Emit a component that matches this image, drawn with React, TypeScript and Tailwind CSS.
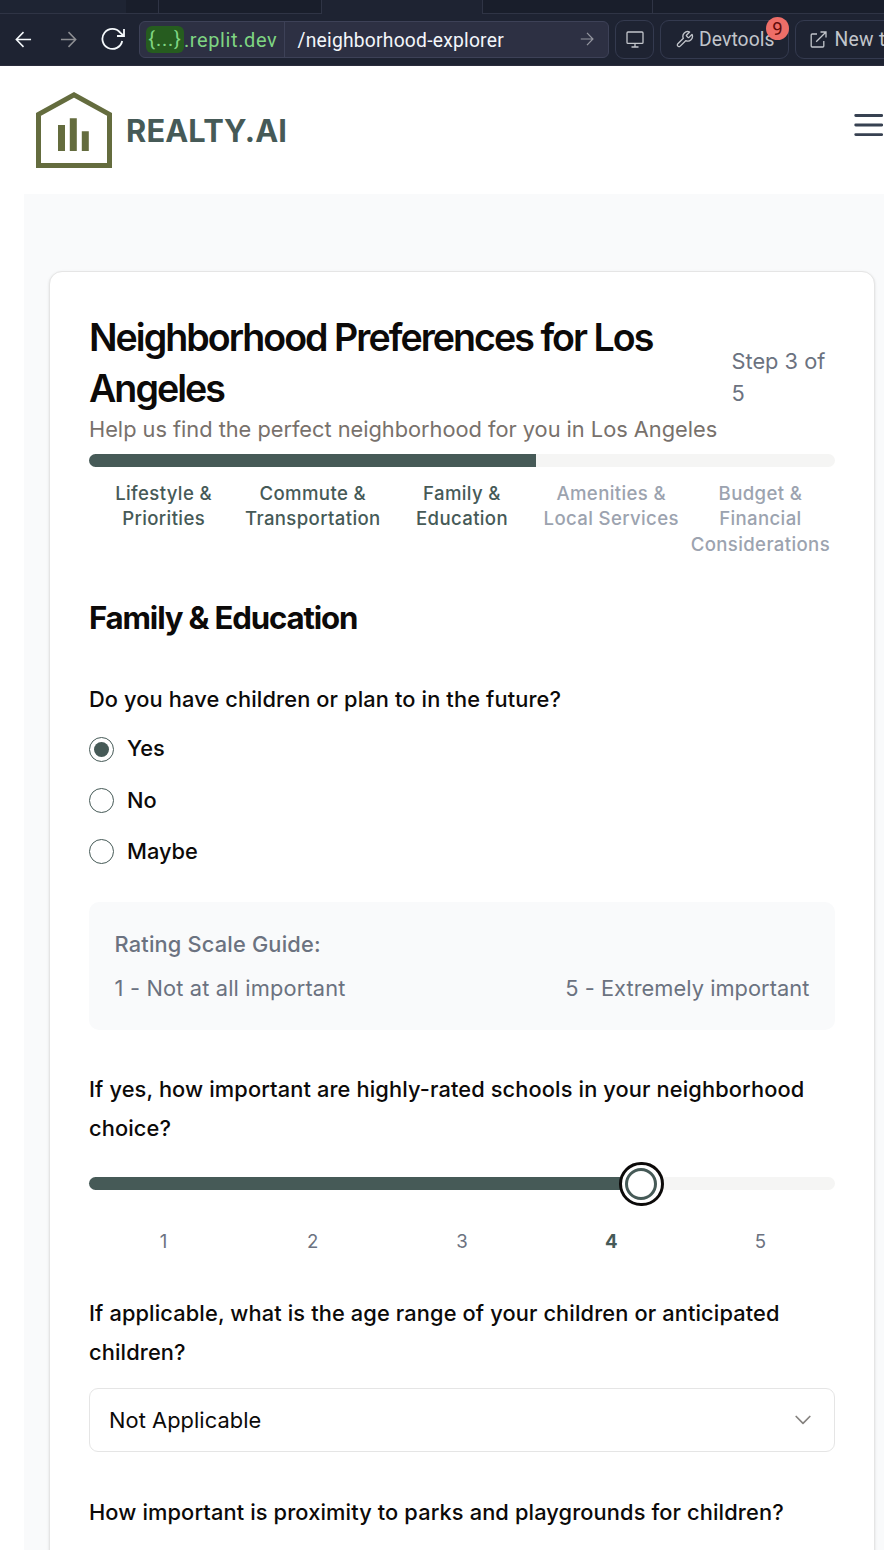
import type { ReactNode } from "react";

const steps = [
  { lines: ["Lifestyle &", "Priorities"], done: true },
  { lines: ["Commute &", "Transportation"], done: true },
  { lines: ["Family &", "Education"], done: true },
  { lines: ["Amenities &", "Local Services"], done: false },
  { lines: ["Budget &", "Financial", "Considerations"], done: false },
];

const ratings = [1, 2, 3, 4, 5];
const selectedRating = 4;

function TabStrip() {
  return (
    <div className="flex h-[14px] shrink-0">
      <div className="w-[126px] border-b border-[#2f3445] bg-[#1e2433]" />
      <div className="w-[33px] border-r border-b border-[#2f3445] bg-[#191e2b]" />
      <div className="w-[163px] border-r border-b border-[#2f3445] bg-[#191e2b]" />
      <div className="w-[160px] bg-[#1e2332]" />
      <div className="w-[171px] border-r border-b border-l border-[#2f3445] bg-[#191e2b]" />
      <div className="flex-1 border-b border-[#2f3445] bg-[#191e2b]" />
    </div>
  );
}

function ArrowRight({ className }: { className: string }) {
  return (
    <svg viewBox="0 0 18 18" className={`shrink-0 ${className}`} fill="none" stroke="currentColor" strokeWidth="1.6">
      <path d="M1 9h15.5M9 1.2 16.6 9 9 16.8" />
    </svg>
  );
}

function Toolbar() {
  return (
    <div className="flex h-[52px] shrink-0 items-center border-b border-[#2a2c3c] pb-px font-[Roboto,sans-serif]">
      <ArrowRight className="ml-[15px] size-[17px] rotate-180 text-[#f5f9fc]" />
      <ArrowRight className="ml-[28px] size-[17px] text-[#8d8e93]" />
      <svg viewBox="0 0 24 24" className="ml-[24px] size-[24px] shrink-0 text-[#f5f9fc]" fill="none" stroke="currentColor" strokeWidth="1.8">
        <path d="M21.2 14A10 10 0 1 1 19.2 5.6L22.6 8.6" />
        <path d="M23 2v7h-7" />
      </svg>
      <div className="ml-[14px] flex h-[37px] w-[470px] shrink-0 items-center rounded-[6px] border border-[#3d4157] bg-[#2d3043]">
        <div className="flex h-full w-[145px] shrink-0 items-center border-r border-[#3d4157] pl-[6px] text-[20px] text-[#7fd582]">
          <span className="flex h-[27px] w-[38px] shrink-0 items-center justify-center rounded-[6px] bg-[#265c1f] text-[20px] tracking-[0.8px]">
            {"{...}"}
          </span>
          <span className="pt-[2px] tracking-[0.6px]">.replit.dev</span>
        </div>
        <span className="ml-[12.5px] pt-[5px] text-[19.3px] tracking-[0.22px] text-[#f3f6fa]">/neighborhood-explorer</span>
        <ArrowRight className="mr-[14px] ml-auto size-[14px] text-[#94969f]" />
      </div>
      <div className="ml-[6px] flex h-[39px] w-[39px] shrink-0 items-center justify-center rounded-[9px] border border-[#343a4f] text-[#c2c5cb]">
        <svg viewBox="0 0 18 17" className="h-[17px] w-[18px]" fill="none" stroke="currentColor" strokeWidth="1.3">
          <rect x="1" y="1" width="16" height="11.4" rx="1" />
          <path d="M9 12.4V16M5.5 16h7" />
        </svg>
      </div>
      <div className="relative ml-[6px] flex h-[39px] w-[129px] shrink-0 items-center rounded-[9px] border border-[#343a4f] pl-[13.5px] text-[#c2c5cb]">
        <svg viewBox="0 0 24 24" className="size-[19px] shrink-0" fill="none" stroke="currentColor" strokeWidth="1.7" strokeLinejoin="round">
          <path d="M14.7 6.3a1 1 0 0 0 0 1.4l1.6 1.6a1 1 0 0 0 1.4 0l3.77-3.77a6 6 0 0 1-7.94 7.94l-6.91 6.91a2.12 2.12 0 0 1-3-3l6.91-6.91a6 6 0 0 1 7.94-7.94l-3.76 3.76z" />
        </svg>
        <span className="ml-[5.5px] pt-[3px] text-[19.3px] tracking-[0.1px]">Devtools</span>
        <span className="absolute -top-[4px] -right-[1px] flex size-[23px] items-center justify-center rounded-full bg-[#ee6e68] pt-[2px] text-[18.5px] leading-none text-[#610b0a]">
          9
        </span>
      </div>
      <div className="ml-[6px] flex h-[39px] w-[140px] shrink-0 items-center rounded-[9px] border border-[#343a4f] pl-[14px] text-[#c2c5cb]">
        <svg viewBox="0 0 17 17" className="size-[17px] shrink-0" fill="none" stroke="currentColor" strokeWidth="1.3">
          <path d="M7 3H2.2A1 1 0 0 0 1.2 4v11a1 1 0 0 0 1 1h10.6a1 1 0 0 0 1-1v-5M10.5 1H16v5.5M16 1 6.2 10.8" />
        </svg>
        <span className="ml-[7.5px] pt-[3px] text-[19.3px] tracking-[0.3px] whitespace-nowrap">New tab</span>
      </div>
    </div>
  );
}

function SiteHeader() {
  return (
    <header className="flex h-[128px] shrink-0 items-center pl-[36px]">
      <svg viewBox="0 0 76 76" className="size-[76px]" fill="none">
        <path d="M2.5 22.4 38 2.9l35.5 19.5v51.1h-71z" stroke="#646c3e" strokeWidth="5" />
        <path d="M22 33h7v26h-7zM33.8 26.2h7V59h-7zM45.8 39.2h7V59h-7z" fill="#646c3e" />
      </svg>
      <span className="ml-[14px] pt-[2px] text-[30.8px] leading-[40px] font-bold tracking-[0.15px] text-[#465a57]">
        REALTY.AI
      </span>
      <svg viewBox="0 0 29 24" className="mr-[1.5px] mb-[10px] ml-auto h-[24px] w-[29px]" stroke="#374151" strokeWidth="2.8" strokeLinecap="round">
        <path d="M1.7 2.5h26M1.7 12h26M1.7 21.6h26" />
      </svg>
    </header>
  );
}

function StepLabels() {
  return (
    <div className="mt-[13.6px] grid h-[77px] grid-cols-5 text-center text-[18.6px] leading-[25.6px] font-medium tracking-[0.36px]">
      {steps.map((step) => (
        <div key={step.lines[0]} className={step.done ? "text-[#465a57]" : "text-[#9ca3af]"}>
          {step.lines.map((line) => (
            <p key={line} className="whitespace-nowrap">
              {line}
            </p>
          ))}
        </div>
      ))}
    </div>
  );
}

function Question({ children, className }: { children: ReactNode; className: string }) {
  return (
    <div className={`text-[21.8px] leading-[38.6px] font-medium tracking-[0.125px] whitespace-nowrap ${className}`}>
      {children}
    </div>
  );
}

function Radio({ label, checked = false }: { label: string; checked?: boolean }) {
  return (
    <div className="flex h-[25.6px] items-center gap-[13px]">
      <span className="flex size-[25px] items-center justify-center rounded-full border border-[#465a57]">
        {checked && <span className="size-[15px] rounded-full bg-[#465a57]" />}
      </span>
      <span className="text-[21.8px] leading-[25.6px] font-medium">{label}</span>
    </div>
  );
}

function RatingSlider() {
  return (
    <div className="mt-[14px]">
      <div className="flex h-[45px] items-center">
        <div className="h-[13px] w-[531px] rounded-l-full bg-[#465a57]" />
        <div className="relative z-10 -mx-px flex size-[44.8px] shrink-0 items-center justify-center rounded-full border-[3.2px] border-[#0c0a09] bg-white">
          <div className="size-[32px] rounded-full border-[3.2px] border-[#465a57]" />
        </div>
        <div className="h-[13px] flex-1 rounded-r-full bg-[#f5f5f4]" />
      </div>
      <div className="mt-[22.5px] grid grid-cols-5 text-center text-[18.6px] leading-[25.6px] text-[#6b7280]">
        {ratings.map((n) => (
          <span key={n} className={n === selectedRating ? "font-bold text-[#465a57]" : ""}>
            {n}
          </span>
        ))}
      </div>
    </div>
  );
}

export default function App() {
  return (
    <div className="flex h-[1550px] w-[884px] flex-col overflow-hidden bg-white font-[Inter,sans-serif] text-[#0c0a09]">
      <div className="flex h-[66px] shrink-0 flex-col bg-[#1e2332]">
        <TabStrip />
        <Toolbar />
      </div>
      <SiteHeader />
      <main className="ml-[24px] flex-1 bg-[#f9fafb] pt-[77px] pl-[25px]">
        <section className="h-[1400px] w-[826px] rounded-[13px] border border-[#e5e5e5] bg-white px-[39px] pt-[39px] shadow-sm">
          <div className="flex h-[134.5px] items-center justify-between">
            <div>
              <h1 className="pt-[1px] text-[37.6px] leading-[51.2px] font-semibold tracking-[-1.97px] whitespace-nowrap">
                Neighborhood Preferences for Los
                <br />
                Angeles
              </h1>
              <p className="-mt-[1px] text-[21.8px] leading-[32px] tracking-[-0.02px] whitespace-nowrap text-[#78716c]">
                Help us find the perfect neighborhood for you in Los Angeles
              </p>
            </div>
            <p className="mb-[2px] w-[103.5px] shrink-0 text-[21.8px] leading-[32px] text-[#6b7280]">
              Step 3 of
              <br />5
            </p>
          </div>
          <div className="mt-[8.5px] h-[13px] overflow-hidden rounded-full bg-[#f5f5f4]">
            <div className="h-full w-[447px] bg-[#465a57]" />
          </div>
          <StepLabels />
          <h2 className="mt-[35px] text-[31.2px] leading-[51.2px] font-bold tracking-[-1.17px]">
            Family &amp; Education
          </h2>
          <Question className="mt-[36.5px]">Do you have children or plan to in the future?</Question>
          <div className="mt-[17.4px] flex flex-col gap-[25.8px]">
            <Radio label="Yes" checked />
            <Radio label="No" />
            <Radio label="Maybe" />
          </div>
          <div className="mt-[37.6px] h-[128px] rounded-[10px] bg-[#f9fafb] px-[25.6px] pt-[25.5px] text-[21.8px] leading-[32px] text-[#6b7280]">
            <p className="font-medium tracking-[0.17px]">Rating Scale Guide:</p>
            <div className="mt-[12px] flex justify-between">
              <span className="tracking-[0.16px]">1 - Not at all important</span>
              <span className="tracking-[0.05px]">5 - Extremely important</span>
            </div>
          </div>
          <Question className="mt-[40px]">
            If yes, how important are highly-rated schools in your neighborhood
            <br />
            choice?
          </Question>
          <RatingSlider />
          <Question className="mt-[39.4px]">
            If applicable, what is the age range of your children or anticipated
            <br />
            children?
          </Question>
          <div className="mt-[16.6px] flex h-[64px] items-center justify-between rounded-[9px] border border-[#e5e5e5] pt-[1px] pr-[23.5px] pl-[19px] text-[21.8px] tracking-[0.07px]">
            Not Applicable
            <svg viewBox="0 0 16 10" className="h-[10px] w-[16px]" fill="none" stroke="#85827f" strokeWidth="1.7" strokeLinecap="round" strokeLinejoin="round">
              <path d="m1.2 1.5 6.8 6.8 6.8-6.8" />
            </svg>
          </div>
          <Question className="mt-[41px]">
            How important is proximity to parks and playgrounds for children?
          </Question>
        </section>
      </main>
    </div>
  );
}
